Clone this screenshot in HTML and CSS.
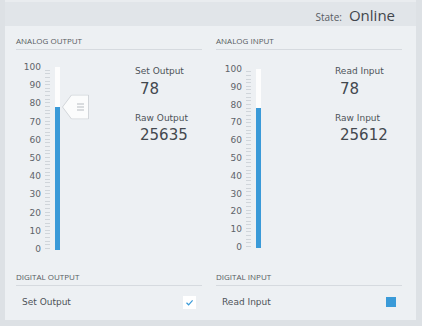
FILE: index.html
```html
<!doctype html>
<html lang="en">
<head>
<meta charset="UTF-8" />
<title>IO Panel</title>
<link rel="stylesheet" href="styles.css">
</head>
<body>
<div class="wrap">

<!-- header -->
<div class="topbar">
<span class="state-lbl">State:</span>
<span class="state-val">Online</span>
</div>

<div class="panel">

<!-- analog output -->
<div class="section">
<div class="sec-title">ANALOG OUTPUT</div>
<div class="analog">
<div class="gauge">
<div class="labels">
<span>100</span><span>90</span><span>80</span><span>70</span><span>60</span><span>50</span>
<span>40</span><span>30</span><span>20</span><span>10</span><span>0</span>
</div>
<div class="ticks"></div>
<div class="track">
<div class="fill" style="height: 78%"></div>
<div class="handle" style="top: 22%">
<svg width="27" height="25" viewBox="0 0 27 25">
<polygon points="0.5,12.5 9.5,0.5 26.5,0.5 26.5,24.5 9.5,24.5" fill="#fbfcfc" stroke="#d2d6da" />
<line x1="15" y1="9.5" x2="22" y2="9.5" stroke="#b7bcc1" />
<line x1="15" y1="12.5" x2="22" y2="12.5" stroke="#b7bcc1" />
<line x1="15" y1="15.5" x2="22" y2="15.5" stroke="#b7bcc1" />
</svg>
</div>
</div>
</div>
<div class="info">
<div class="info-lbl">Set Output</div>
<div class="info-val">78</div>
<div class="info-lbl second">Raw Output</div>
<div class="info-val">25635</div>
</div>
</div>
</div>

<!-- analog input -->
<div class="section">
<div class="sec-title">ANALOG INPUT</div>
<div class="analog">
<div class="gauge gauge-in">
<div class="labels">
<span>100</span><span>90</span><span>80</span><span>70</span><span>60</span><span>50</span>
<span>40</span><span>30</span><span>20</span><span>10</span><span>0</span>
</div>
<div class="ticks"></div>
<div class="track">
<div class="fill" style="height: 78%"></div>
</div>
</div>
<div class="info info-in">
<div class="info-lbl">Read Input</div>
<div class="info-val">78</div>
<div class="info-lbl second">Raw Input</div>
<div class="info-val">25612</div>
</div>
</div>
</div>

<!-- digital output -->
<div class="section digital">
<div class="sec-title">DIGITAL OUTPUT</div>
<div class="dig-row">
<span>Set Output</span>
<span class="checkbox">
<svg width="13" height="13" viewBox="0 0 13 13">
<polyline points="3.5,6.8 5.6,8.8 9.6,4.3" fill="none" stroke="#3a9ad8" stroke-width="1.2" />
</svg>
</span>
</div>
</div>

<!-- digital input -->
<div class="section digital">
<div class="sec-title">DIGITAL INPUT</div>
<div class="dig-row">
<span>Read Input</span>
<span class="led"></span>
</div>
</div>

</div>
</div>
</body>
</html>
```

FILE: styles.css
```css
body {
margin: 0;
background-color: #dde1e5;
font-family: "DejaVu Sans", sans-serif;
color: #4e5359;
}

.wrap {
padding: 0 6px 6px 5px;
}

/* horni lista se stavem */
.topbar {
height: 21px;
padding-top: 3px;
padding-right: 21px;
border-top: 2px solid #e9ecef;
background-color: #e1e5e9;
display: flex;
justify-content: flex-end;
align-items: baseline;
font-family: "Open Sans", sans-serif;
line-height: 20px;
}

.state-lbl {
font-size: 10px;
color: #575c62;
margin-right: 7px;
}

.state-val {
font-size: 15px;
color: #41464c;
}

.panel {
background-color: #edf0f3;
display: grid;
grid-template-columns: 186px 186px;
column-gap: 14px;
padding: 9px 14px 8px 11px;
}

.sec-title {
font-family: "Open Sans", sans-serif;
font-size: 8px;
line-height: 11px;
color: #565b61;
padding-bottom: 3px;
border-bottom: 1px solid #d6dadf;
}

.analog {
display: flex;
align-items: flex-start;
}

.gauge {
display: flex;
height: 194px;
margin-top: 11px;
}

.gauge-in {
height: 190px;
margin-top: 13px;
}

.labels {
width: 25px;
display: flex;
flex-direction: column;
justify-content: space-between;
text-align: right;
font-size: 9px;
line-height: 12px;
color: #5e6369;
}

.gauge-in .labels {
width: 26px;
}

.ticks {
width: 5px;
margin: 6px 5px 6px 4px;
background: repeating-linear-gradient(
to top,
#d0d5da 0,
#d0d5da 1px,
transparent 1px,
transparent 3.64px
);
}

.track {
width: 5px;
margin: 6px 0 5px 0;
background-color: #fdfdfd;
display: flex;
flex-direction: column;
justify-content: flex-end;
position: relative;
}

.fill {
background-color: #3a9ad8;
}

.handle {
position: absolute;
left: 7px;
transform: translateY(-50%);
height: 25px;
}

.handle svg {
display: block;
}

.info {
margin-left: 75px;
margin-top: 15px;
}

.info-in {
margin-left: 74px;
}

.info-lbl {
font-size: 9px;
line-height: 12px;
color: #4e5359;
}

.info-lbl.second {
margin-top: 14px;
}

.info-val {
font-size: 15px;
line-height: 18px;
color: #43484e;
margin-top: 3px;
padding-left: 5px;
}

.info-lbl.second + .info-val {
margin-top: 2px;
}

.digital {
margin-top: 16px;
}

.dig-row {
height: 20px;
margin-top: 6px;
padding: 0 6px;
display: flex;
justify-content: space-between;
align-items: center;
font-size: 9px;
line-height: 12px;
color: #4e5359;
}

.checkbox {
width: 13px;
height: 13px;
background-color: #ffffff;
}

.checkbox svg {
display: block;
}

.led {
width: 10px;
height: 10px;
background-color: #3a9ad8;
}
```
